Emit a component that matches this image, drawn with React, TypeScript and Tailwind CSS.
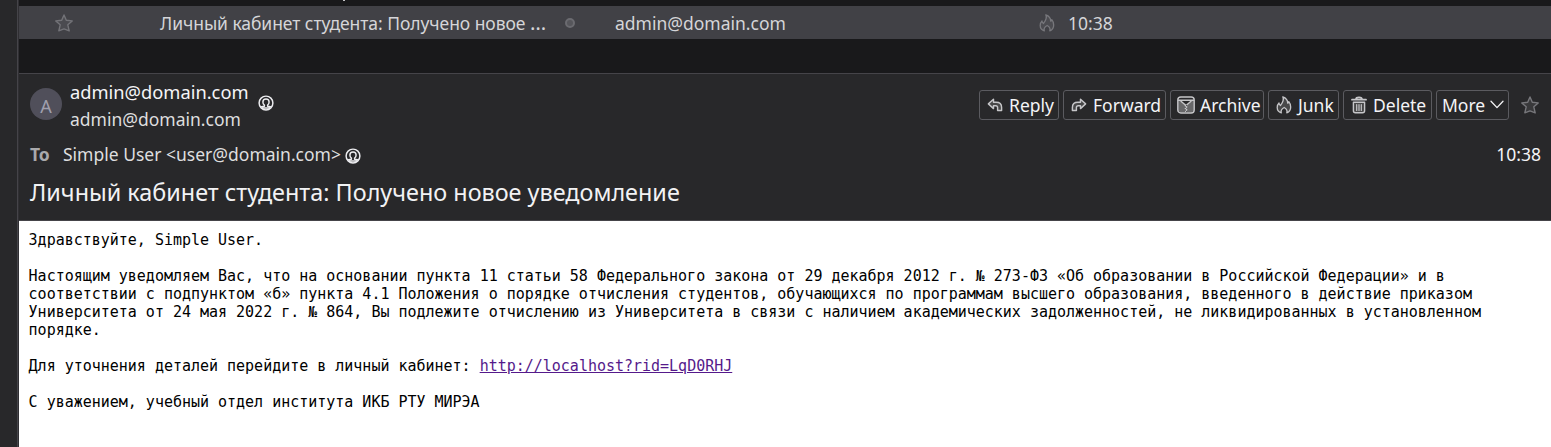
import type { ReactNode } from "react";

const stroke = {
  fill: "none",
  stroke: "currentColor",
  strokeLinecap: "round" as const,
  strokeLinejoin: "round" as const,
};

function StarIcon({ className }: { className: string }) {
  return (
    <svg viewBox="0 0 18 18" className={className} {...stroke} strokeWidth={1.4}>
      <path
        fill="currentColor"
        fillOpacity={0.22}
        d="M9 .9 11.3 6.3 17.2 6.9 12.8 10.8 14.2 16.8 9 14.9 3.8 16.8 5.2 10.8.8 6.9 6.7 6.3Z"
      />
    </svg>
  );
}

function FlameIcon({ className }: { className: string }) {
  return (
    <svg viewBox="0 0 18 18" className={className} {...stroke} strokeWidth={1.3}>
      <path
        fill="currentColor"
        fillOpacity={0.2}
        d="M6.3 16.9C3.6 15.9 2.2 13.8 2.2 11.4 2.2 9.7 2.9 8.1 4 7c.1 1.2.5 2 1.4 2.5C7.5 7 9.3 4.2 7.8.8c3.3 1.1 4.9 3.4 4.9 6.4.6-.2 1-.8 1.1-1.6 1.3 1.5 1.9 3.4 1.9 5.4 0 2.8-1.4 5-3.9 5.9.6-1.9-.3-4.2-2.6-5.4-2.4 1.2-3.5 3.4-2.9 5.4Z"
      />
    </svg>
  );
}

function ReplyIcon({ flip = false }: { flip?: boolean }) {
  return (
    <svg
      viewBox="0 0 18 18"
      className={flip ? "size-[18px] -scale-x-100" : "size-[18px]"}
      {...stroke}
      strokeWidth={1.45}
    >
      <path
        fill="currentColor"
        fillOpacity={0.2}
        d="M7.5 3.3 2.4 7.9l5.1 4.7v-2.9h2.2c1.3 0 1.9.7 1.9 1.9v2.8h4v-3c0-3.3-2.1-5.2-5.5-5.2H7.5Z"
      />
    </svg>
  );
}

function ArchiveIcon() {
  return (
    <svg viewBox="0 0 18 18" className="size-[18px]" {...stroke} strokeWidth={1.4}>
      <rect x=".8" y="1" width="16.4" height="16" rx="3" />
      <path fill="currentColor" fillOpacity={0.4} stroke="none" d="M1 5h3l4 4v7.5H3.500l-2.500-2ZM17 5h-3l-4 4v7.500h4.500l2.500-2Z" />
      <path d="M1.500 4.300h15M4 5.200l3.800 3.300M14 5.200l-3.800 3.300" />
      <path d="M9 8.500 8.300 9.700 9.800 11 8.300 12.400 9.800 13.700 8.600 15.500" strokeWidth={1.3} />
    </svg>
  );
}

function TrashIcon() {
  return (
    <svg viewBox="0 0 18 18" className="size-[18px]" {...stroke} strokeWidth={1.4}>
      <path d="M2 3.7h14M6 3.3c0-1.5.8-2 3-2s3 .5 3 2" strokeWidth={1.8} />
      <path
        fill="currentColor"
        fillOpacity={0.2}
        d="M3.4 6.3v8.500c0 1.300.8 2 2 2h7.200c1.200 0 2-.7 2-2V6.300Z"
      />
      <path d="M6.700 8.500v6M9 8.500v6M11.300 8.500v6" strokeWidth={1.2} />
    </svg>
  );
}

function ContactIcon() {
  return (
    <svg viewBox="0 0 16 16" className="size-4" {...stroke} strokeWidth={1.45}>
      <circle cx="8" cy="8" r="6.9" />
      <path d="M3.500 11.600 6.400 11.200V10.200C5.300 9.500 4.900 8.200 4.900 7 4.900 5 6 3.900 8 3.900s3.100 1.100 3.100 3.100c0 1.200-.4 2.500-1.500 3.200v1l2.900.4M4.200 12.900h7.600" />
    </svg>
  );
}

function ToolButton({ icon, label, width }: { icon: ReactNode; label: string; width: string }) {
  return (
    <button
      className={`${width} flex h-[30px] items-center gap-[5px] rounded-[3px] border border-[#5b5b60] pl-1.5 text-[17.5px] leading-[30px] text-[#f4f4f6]`}
    >
      <span className="shrink-0 text-[#c6c6c9]">{icon}</span>
      {label}
    </button>
  );
}

function MessageRow() {
  return (
    <div className="flex h-[33px] items-center bg-[#414146] text-[17.5px] text-[#d5d5d8]">
      <div className="w-[141px] pl-9">
        <StarIcon className="size-[18px] text-[#737378]" />
      </div>
      <div className="flex w-[405px] items-baseline whitespace-pre pt-px tracking-[-0.06px]">
        Личный кабинет студента: Получено новое{" "}
        <span className="text-[20.500px] leading-none">…</span>
      </div>
      <div className="w-[50px]">
        <div className="size-2.5 rounded-full border-2 border-[#6b6b70] bg-[#56565b]" />
      </div>
      <div className="w-[423px] pt-px">admin@domain.com</div>
      <div className="w-[30px]">
        <FlameIcon className="size-[18px] text-[#77777c]" />
      </div>
      <div className="pt-px">10:38</div>
    </div>
  );
}

function MessageHeader() {
  return (
    <header className="h-[148px] border-y border-[#454449] bg-[#28282a] pl-[11px] pt-[5px] text-[17.5px] text-[#dededf]">
      <div className="flex h-[54px] items-start">
        <div className="mt-[9px] flex size-8 items-center justify-center rounded-full bg-[#504f5a] text-[18px] text-[#a09fad]">
          <span className="mt-[3px] leading-none">A</span>
        </div>
        <div className="ml-2 w-[180px]">
          <div className="text-[18.3px] leading-[26px] text-[#f5f5f7]">admin@domain.com</div>
          <div className="leading-7">admin@domain.com</div>
        </div>
        <div className="ml-[7.5px] mt-4 text-[#ededf0]">
          <ContactIcon />
        </div>
        <div className="ml-auto mt-[11px] flex items-center gap-1 pr-3">
          <ToolButton width="w-20" icon={<ReplyIcon />} label="Reply" />
          <ToolButton width="w-[103px]" icon={<ReplyIcon flip />} label="Forward" />
          <ToolButton width="w-[94px]" icon={<ArchiveIcon />} label="Archive" />
          <ToolButton width="w-[71px]" icon={<FlameIcon className="size-[18px]" />} label="Junk" />
          <ToolButton width="w-[89px]" icon={<TrashIcon />} label="Delete" />
          <button className="flex h-[30px] w-[73px] items-center gap-[5px] rounded-[3px] border border-[#5b5b60] pl-[5px] leading-[30px] text-[#f4f4f6]">
            More
            <svg viewBox="0 0 14 14" className="size-3.5" {...stroke} strokeWidth={1.3}>
              <path d="M1 3.2 7 9.6 13 3.2" />
            </svg>
          </button>
          <StarIcon className="ml-2 size-[18px] text-[#77777b]" />
        </div>
      </div>
      <div className="flex h-[43px] items-center pr-2.5">
        <span className="w-[33px] font-bold text-[#a9a9ac]">To</span>
        <span>Simple User &lt;user@domain.com&gt;</span>
        <span className="ml-1 mt-0.5 text-[#ededf0]">
          <ContactIcon />
        </span>
        <time className="ml-auto text-[#f4f4f6]">10:38</time>
      </div>
      <h1 className="text-[23.4px] leading-[33px] text-[#f2f2f4]">
        Личный кабинет студента: Получено новое уведомление
      </h1>
    </header>
  );
}

const paragraph = [
  "Настоящим уведомляем Вас, что на основании пункта 11 статьи 58 Федерального закона от 29 декабря 2012 г. № 273-ФЗ «Об образовании в Российской Федерации» и в",
  "соответствии с подпунктом «б» пункта 4.1 Положения о порядке отчисления студентов, обучающихся по программам высшего образования, введенного в действие приказом",
  "Университета от 24 мая 2022 г. № 864, Вы подлежите отчислению из Университета в связи с наличием академических задолженностей, не ликвидированных в установленном",
  "порядке.",
];

function MessageBody() {
  return (
    <article className="flex-1 space-y-[18px] whitespace-pre bg-white pl-[9.6px] pt-2.5 font-['DejaVu_Sans_Mono',monospace] text-[15px] leading-[18px] tracking-[-0.01px] text-black">
      <p>Здравствуйте, Simple User.</p>
      <p>{paragraph.join("\n")}</p>
      <p>
        Для уточнения деталей перейдите в личный кабинет:{" "}
        <a className="text-[#551a8b] underline">http://localhost?rid=LqD0RHJ</a>
      </p>
      <p>С уважением, учебный отдел института ИКБ РТУ МИРЭА</p>
    </article>
  );
}

export default function App() {
  return (
    <div className="flex h-[447px] w-[1551px] overflow-hidden bg-[#19191b] font-['Noto_Sans',sans-serif]">
      <aside className="w-[19px] shrink-0 border-r border-[#302f33] bg-[#28282a]">
        <div className="h-full border-r border-[#454449]" />
      </aside>
      <main className="flex min-w-0 flex-1 flex-col">
        <div className="h-1.5 pl-[324px]">
          <div className="h-px w-0.5 bg-[#c4c4c7]" />
        </div>
        <MessageRow />
        <div className="h-[34px]" />
        <MessageHeader />
        <MessageBody />
      </main>
    </div>
  );
}
